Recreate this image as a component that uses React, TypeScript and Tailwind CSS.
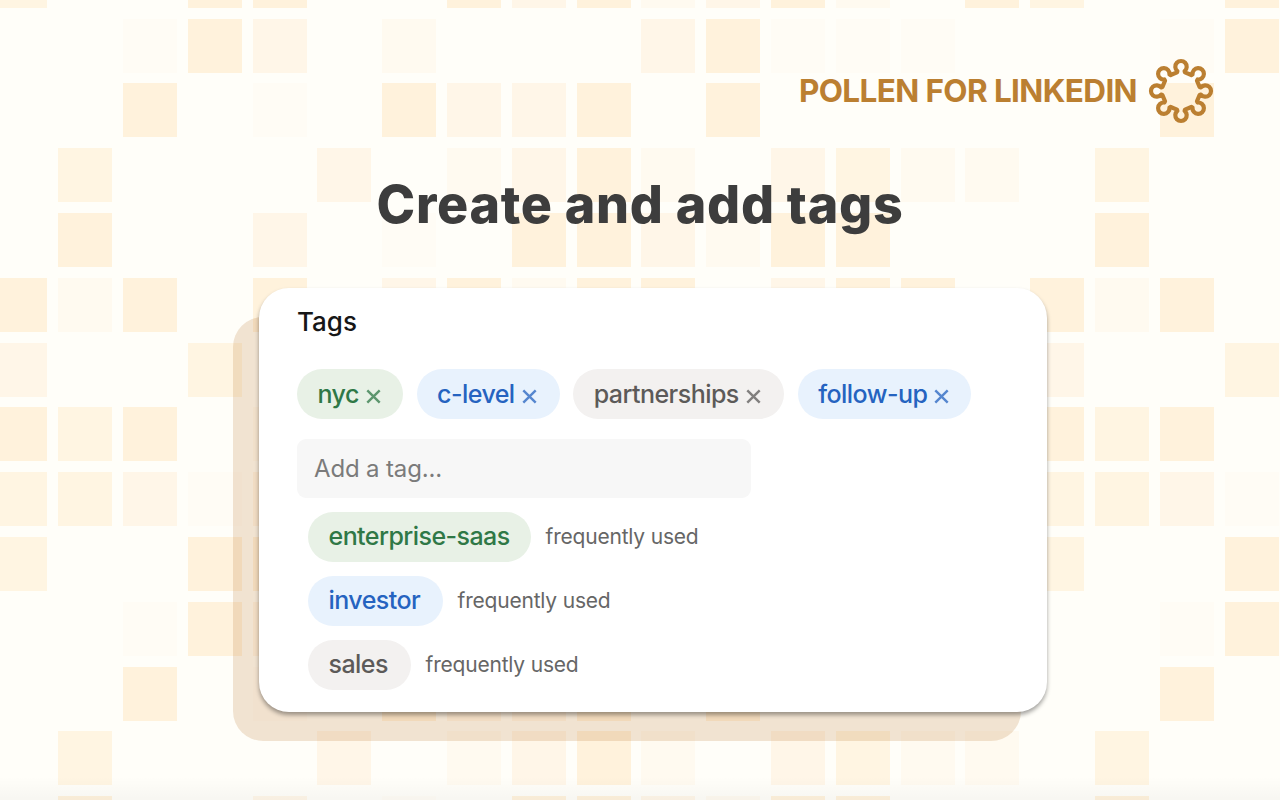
import clsx from "clsx";

// one tile of the backdrop: 16 columns by 9 rows, "." is an empty cell
const PATTERN = [
  "d..ee..ecebceb.e",
  "..aec.b...ceaaa.",
  "..e.a.ecce.e....",
  ".d...c.bceb.cdbb",
  ".e..c.a.eecbee..",
  "ebe.e.cebee.cee.",
  "c..d............",
  "ede.b...........",
  "ddcac...........",
];

const SHADES: Record<string, string> = {
  ".": "",
  a: "bg-[#fffcf5]",
  b: "bg-[#fffaf0]",
  c: "bg-[#fff6e8]",
  d: "bg-[#fff5e2]",
  e: "bg-[#fff2dc]",
};

const TONES = {
  green: "bg-[#e8f1e6] text-[#2f7846]",
  blue: "bg-[#e8f2fd] text-[#2563c0]",
  gray: "bg-[#f3f1f0] text-[#5c5a59]",
};

type Tone = keyof typeof TONES;

const tags: { label: string; tone: Tone; width: string }[] = [
  { label: "nyc", tone: "green", width: "w-[106px]" },
  { label: "c-level", tone: "blue", width: "w-[143px]" },
  { label: "partnerships", tone: "gray", width: "w-[211px]" },
  { label: "follow-up", tone: "blue", width: "w-[173px]" },
];

const suggestions: { label: string; tone: Tone; width: string }[] = [
  { label: "enterprise-saas", tone: "green", width: "w-[223px]" },
  { label: "investor", tone: "blue", width: "w-[135px]" },
  { label: "sales", tone: "gray", width: "w-[103px]" },
];

function Backdrop() {
  const rows = Array.from({ length: 14 }, (_, r) => PATTERN[r % 9]);
  return (
    <div className="absolute inset-0 overflow-hidden">
      <div className="-ml-[6.6px] -mt-[46.2px] grid w-[1296px] grid-cols-[repeat(20,54px)] gap-[10.8px]">
        {rows.map((row, r) =>
          Array.from({ length: 20 }, (_, c) => (
            <div key={`${r}-${c}`} className={clsx("h-[54px]", SHADES[row[c % 16]])} />
          ))
        )}
      </div>
      <div className="absolute inset-x-0 bottom-0 h-6 bg-linear-to-b from-transparent to-black/[0.03]" />
    </div>
  );
}

function PollenLogo() {
  const point = (x: number, y: number, turn: number) => {
    const a = (turn * Math.PI) / 4;
    const px = x * Math.cos(a) - y * Math.sin(a);
    const py = x * Math.sin(a) + y * Math.cos(a);
    return `${px.toFixed(2)} ${py.toFixed(2)}`;
  };
  const d = Array.from({ length: 8 }, (_, i) =>
    [
      `${i === 0 ? "M" : "L"}${point(-4, -18.6, i)}`,
      `L${point(-3.6, -19.9, i)}`,
      `A5.7 5.7 0 1 1 ${point(3.6, -19.9, i)}`,
      `L${point(4, -18.6, i)}`,
    ].join("")
  ).join("");
  return (
    <svg width="66" height="66" viewBox="-33 -33 66 66" fill="none">
      <path d={`${d}Z`} stroke="#bb7f31" strokeWidth="4.2" strokeLinejoin="round" />
    </svg>
  );
}

function Remove() {
  return (
    <svg className="ml-[7px] mt-[3px] opacity-75" width="15" height="15" viewBox="0 0 15 15">
      <path d="M1.3 1.3l12.4 12.4M13.7 1.3l-12.4 12.4" stroke="currentColor" strokeWidth="2.4" />
    </svg>
  );
}

function Tag({ label, tone, width, removable }: { label: string; tone: Tone; width: string; removable?: boolean }) {
  return (
    <span
      className={clsx(
        "flex h-[50px] shrink-0 items-center whitespace-nowrap rounded-full pl-[20.5px] pt-px text-[25px] font-medium tracking-[-0.55px]",
        TONES[tone],
        width
      )}
    >
      {label}
      {removable && <Remove />}
    </span>
  );
}

export default function App() {
  return (
    <main className="relative h-[800px] w-[1280px] overflow-hidden bg-[#fffef9] font-['Inter',sans-serif]">
      <Backdrop />
      <div className="relative flex flex-col">
        <header className="flex h-[124px] items-end justify-end gap-[11px] pr-[66px]">
          <span className="flex h-[66px] items-center whitespace-nowrap text-[31.5px] font-bold tracking-[-0.62px] text-[#bb7f31]">
            POLLEN FOR LINKEDIN
          </span>
          <PollenLogo />
        </header>
        <h1 className="mt-[51px] h-[60px] whitespace-nowrap text-center text-[52px] font-extrabold leading-[60px] tracking-[0.7px] text-[#3d3d3d]">
          Create and add tags
        </h1>

        <div className="relative ml-[259px] mt-[53px] h-[424px] w-[788px]">
          <div className="absolute -left-[26px] top-[29px] h-[424px] w-[788px] rounded-[30px] bg-[#b87832]/20" />
          <section className="relative flex h-full flex-col rounded-[30px] bg-white pl-[38px] shadow-[0_3px_4px_rgba(0,0,0,0.36)]">
            <h2 className="mt-[17px] h-[34px] text-[26px] font-medium leading-[34px] text-[#171717]">Tags</h2>
            <div className="mt-[30px] flex gap-[13.6px]">
              {tags.map((tag) => (
                <Tag key={tag.label} {...tag} removable />
              ))}
            </div>
            <div className="mt-5 flex h-[59px] w-[454px] items-center rounded-[9px] bg-[#f7f7f7] pl-[17px] pt-px text-[24px] tracking-[-0.15px] text-[#7b7b7b]">
              Add a tag...
            </div>
            <div className="ml-[11px] mt-[13.6px] flex flex-col gap-[14px]">
              {suggestions.map((tag) => (
                <div key={tag.label} className="flex items-center gap-[14.6px]">
                  <Tag {...tag} />
                  <span className="whitespace-nowrap text-[21px] tracking-[-0.2px] text-[#666]">frequently used</span>
                </div>
              ))}
            </div>
          </section>
        </div>
      </div>
    </main>
  );
}
